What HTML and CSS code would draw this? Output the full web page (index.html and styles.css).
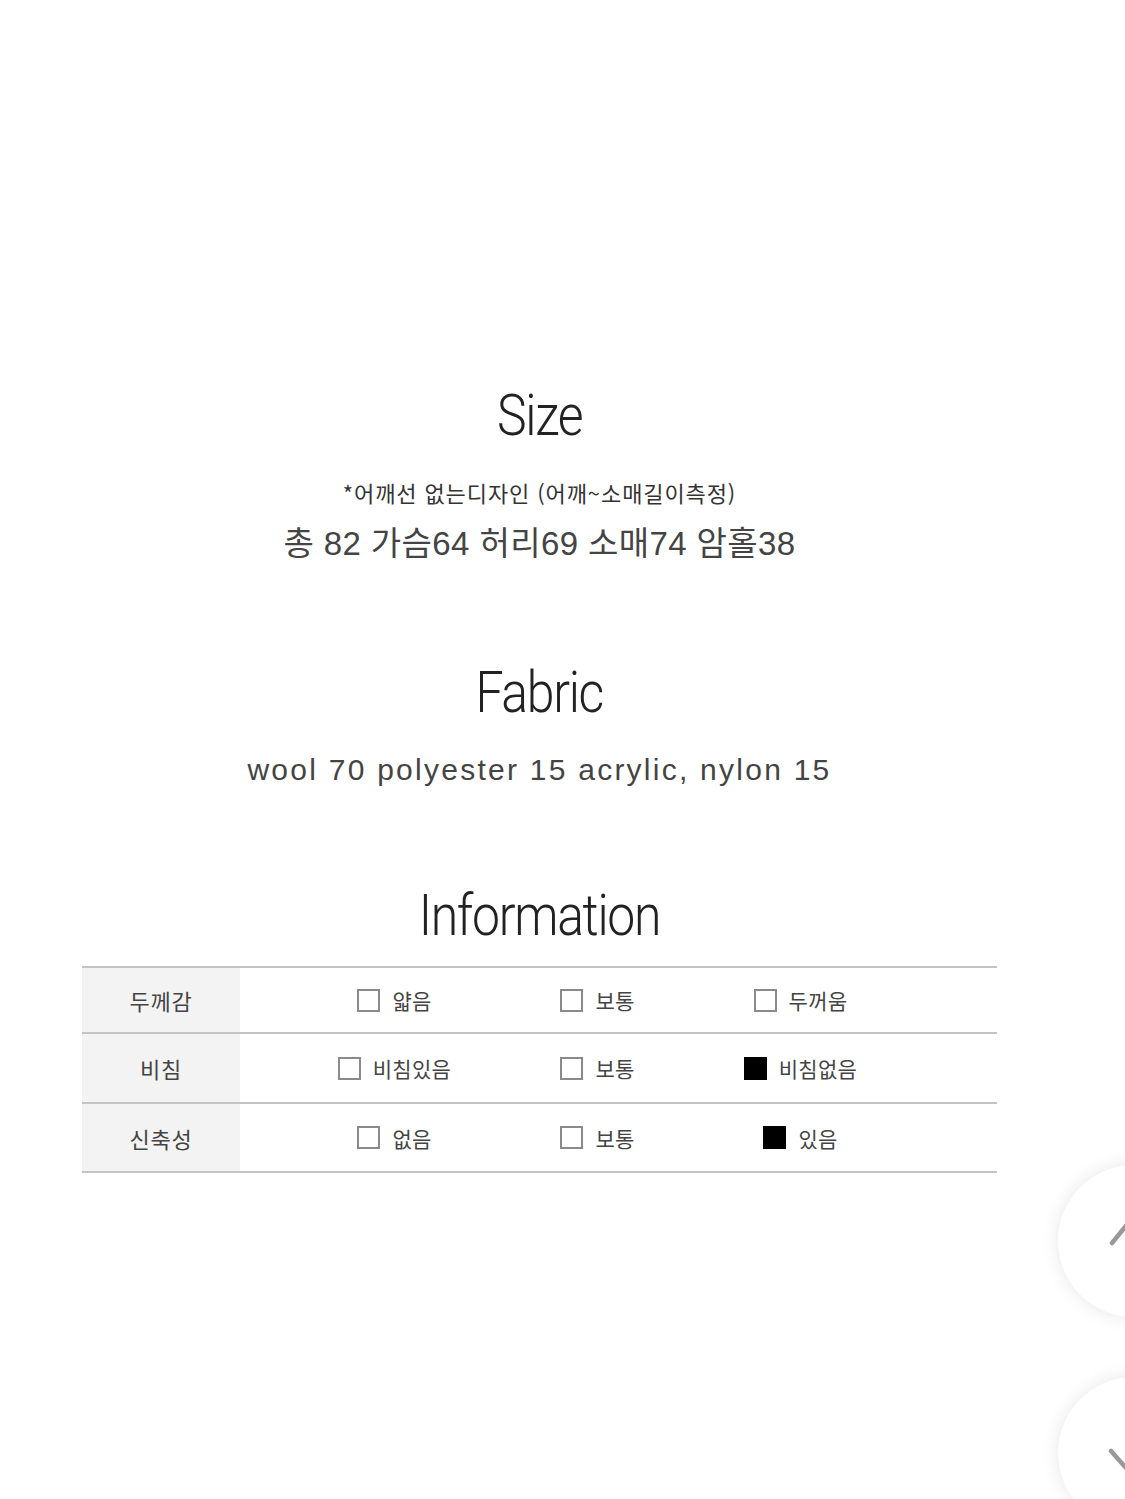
FILE: index.html
```html
<!DOCTYPE html>
<html lang="ko">
<head>
<meta charset="utf-8">
<title>Size / Fabric / Information</title>
<link rel="stylesheet" href="styles.css">
</head>
<body>
<main class="detail">
  <section class="block block-size">
    <h2 class="heading"><span class="heading-text">Size</span></h2>
    <p class="note">*어깨선 없는디자인 (어깨~소매길이측정)</p>
    <p class="measure">총 82 가슴64 허리69 소매74 암홀38</p>
  </section>
  <section class="block block-fabric">
    <h2 class="heading"><span class="heading-text">Fabric</span></h2>
    <p class="fabric">wool 70 polyester 15 acrylic, nylon 15</p>
  </section>
  <section class="block block-info">
    <h2 class="heading"><span class="heading-text">Information</span></h2>
    <div class="info-table">
      <div class="info-row">
        <div class="info-label">두께감</div>
        <div class="info-opts">
          <span class="opt"><span class="box"></span>얇음</span>
          <span class="opt"><span class="box"></span>보통</span>
          <span class="opt"><span class="box"></span>두꺼움</span>
        </div>
      </div>
      <div class="info-row">
        <div class="info-label">비침</div>
        <div class="info-opts">
          <span class="opt"><span class="box"></span>비침있음</span>
          <span class="opt"><span class="box"></span>보통</span>
          <span class="opt"><span class="box on"></span>비침없음</span>
        </div>
      </div>
      <div class="info-row">
        <div class="info-label">신축성</div>
        <div class="info-opts">
          <span class="opt"><span class="box"></span>없음</span>
          <span class="opt"><span class="box"></span>보통</span>
          <span class="opt"><span class="box on"></span>있음</span>
        </div>
      </div>
    </div>
  </section>
</main>
<button class="fab fab-up" aria-label="위로">
  <svg viewBox="0 0 152 152" width="152" height="152"><polyline points="54,78 76,51 98,78" fill="none" stroke="#999" stroke-width="4.5" stroke-linecap="round" stroke-linejoin="round"/></svg>
</button>
<button class="fab fab-down" aria-label="아래로">
  <svg viewBox="0 0 152 152" width="152" height="152"><polyline points="53,74 76,100 99,74" fill="none" stroke="#999" stroke-width="4.5" stroke-linecap="round" stroke-linejoin="round"/></svg>
</button>
</body>
</html>
```
FILE: styles.css
```css
html, body {
  margin: 0;
  padding: 0;
  background: #fff;
}
body {
  width: 1125px;
  height: 1499px;
  overflow: hidden;
  font-family: "Liberation Sans", "Noto Sans CJK KR", sans-serif;
  color: #333;
}
.detail {
  width: 915px;
  margin-left: 82px;
  padding-top: 386px;
  text-align: center;
}
.block { margin: 0; }
.heading {
  margin: 0;
  font-family: Roboto, "Liberation Sans", sans-serif;
  font-weight: 300;
  font-size: 58px;
  line-height: 58px;
  color: #222;
}
.heading-text {
  display: inline-block;
  transform: scaleX(0.86);
  letter-spacing: -1.5px;
}
.note {
  margin: 33px 0 0;
  font-family: "Noto Sans CJK KR", sans-serif;
  font-size: 22px;
  line-height: 30px;
  letter-spacing: 0.9px;
  color: #333;
}
.measure {
  margin: 16px 0 0;
  font-size: 33px;
  line-height: 42px;
  letter-spacing: 0.4px;
  color: #444;
}
.block-fabric { padding-top: 98px; }
.fabric {
  margin: 29px 0 0;
  font-size: 30px;
  line-height: 40px;
  letter-spacing: 2.25px;
  color: #444;
}
.block-info { padding-top: 96px; }
.info-table {
  margin-top: 22px;
  border-bottom: 2px solid #c4c4c4;
  font-family: "Noto Sans CJK KR", sans-serif;
  font-size: 21px;
  color: #444;
}
.info-row {
  display: grid;
  grid-template-columns: 158px 1fr;
  border-top: 2px solid #c4c4c4;
  height: 68px;
}
.info-row:first-child { height: 64px; }
.info-row:last-child { height: 67px; }
.info-label {
  background: #f3f3f3;
  display: flex;
  align-items: center;
  justify-content: center;
  font-size: 22px;
  letter-spacing: 0.8px;
}
.info-opts {
  display: grid;
  grid-template-columns: repeat(3, 203px);
  padding-left: 53px;
  align-items: center;
}
.opt {
  display: flex;
  align-items: center;
  justify-content: center;
  gap: 12px;
  letter-spacing: 0.3px;
}
.box {
  width: 19px;
  height: 19px;
  border: 2px solid #8a8a8a;
  background: #fff;
  flex: none;
}
.box.on {
  background: #000;
  border-color: #000;
}
.fab {
  position: fixed;
  left: 1058px;
  width: 152px;
  height: 152px;
  padding: 0;
  border: 0;
  border-radius: 50%;
  background: #fff;
  box-shadow: 0 0 18px rgba(0, 0, 0, 0.1);
  cursor: pointer;
}
.fab svg { display: block; }
.fab-up { top: 1165px; }
.fab-down { top: 1377px; }
```
